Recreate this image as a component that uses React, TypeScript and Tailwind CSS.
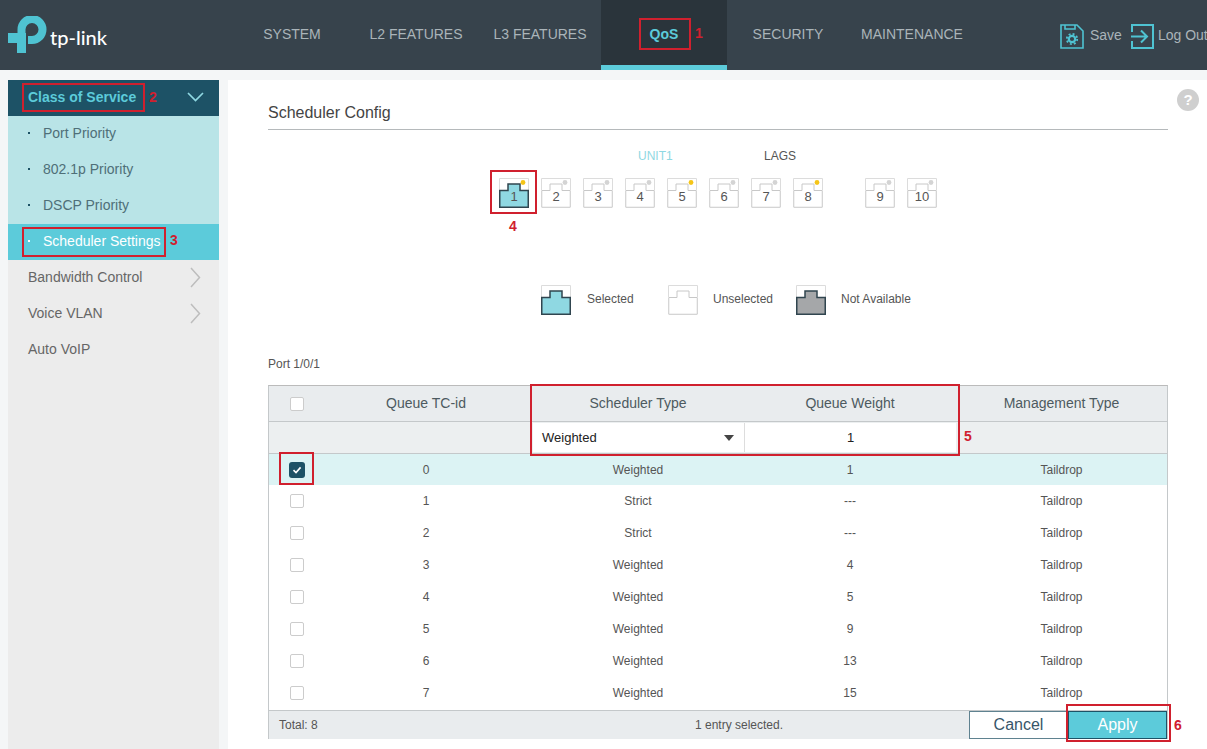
import React from 'react';

const navItems = ['SYSTEM', 'L2 FEATURES', 'L3 FEATURES', 'QoS', 'SECURITY', 'MAINTENANCE'];

const rows = [
  { id: 0, type: 'Weighted', weight: '1', checked: true },
  { id: 1, type: 'Strict', weight: '---' },
  { id: 2, type: 'Strict', weight: '---' },
  { id: 3, type: 'Weighted', weight: '4' },
  { id: 4, type: 'Weighted', weight: '5' },
  { id: 5, type: 'Weighted', weight: '9' },
  { id: 6, type: 'Weighted', weight: '13' },
  { id: 7, type: 'Weighted', weight: '15' },
];

const Logo = () => (
  <svg width="40" height="38" viewBox="0 0 40 38" className="shrink-0">
    <path d="M13.5 17 V13.5 A10.5 10.5 0 1 1 24 24 H20" fill="none" stroke="#4fc3d2" strokeWidth="8" />
    <path d="M0 17 H18 V37 H9 V27 H0 Z" fill="#4fc3d2" />
  </svg>
);

const PortIcon = ({ state, dot, label }: { state: 'selected' | 'unselected' | 'disabled'; dot?: 'on' | 'off'; label?: string }) => {
  const fill = state === 'selected' ? '#8fd8e2' : state === 'disabled' ? '#a5a7a9' : '#ffffff';
  const stroke = state === 'unselected' ? '#c8c8c8' : '#30454f';
  return (
    <div className="relative w-[30px] h-[30px] shrink-0">
      <svg width="30" height="30" viewBox="0 0 30 30" className="block">
        <path d="M0.5 12 V0.5 H29.5 V12" fill="none" stroke="#dcdcdc" />
        <path
          d="M0.75 29.25 V12.5 H9 V6 H21 V12.5 H29.25 V29.25 Z"
          fill={fill}
          stroke={stroke}
          strokeWidth={state === 'unselected' ? 1 : 1.5}
        />
        {dot && <circle cx="24" cy="4.5" r="2.4" fill={dot === 'on' ? '#f5c518' : '#d4d4d4'} />}
      </svg>
      {label && (
        <span className="absolute inset-x-0 top-[10px] text-center text-[13px] leading-[18px] text-[#555]">{label}</span>
      )}
    </div>
  );
};

const Checkbox = ({ checked }: { checked?: boolean }) =>
  checked ? (
    <span className="flex h-[16px] w-[16px] items-center justify-center rounded-[3px] bg-[#1d5266]">
      <svg width="10" height="10" viewBox="0 0 10 10">
        <path d="M1.5 5.2 L4 7.6 L8.6 2.4" fill="none" stroke="#fff" strokeWidth="1.6" />
      </svg>
    </span>
  ) : (
    <span className="block h-[14px] w-[14px] rounded-[2px] border border-[#ccc] bg-white" />
  );

const Mark = ({ className, n, numClass }: { className: string; n?: string; numClass?: string }) => (
  <>
    <div className={`absolute border-2 border-[#d0202e] pointer-events-none ${className}`} />
    {n && <span className={`absolute text-[14px] leading-[16px] font-bold text-[#d0202e] ${numClass}`}>{n}</span>}
  </>
);

const ChevronRightThin = () => (
  <svg width="11" height="21" viewBox="0 0 11 21" fill="none" stroke="#bdbdbd" strokeWidth="1.5">
    <path d="M1 1 L9.5 10.5 L1 20" />
  </svg>
);

const gridCols = 'grid grid-cols-[51px_212px_212px_212px_211px]';

export default function App() {
  return (
    <div className="relative h-[749px] w-[1207px] overflow-hidden bg-[#f4f6f7] font-['Liberation_Sans',Arial,sans-serif]">
      {/* Header */}
      <header className="flex h-[70px] items-stretch bg-[#37434c]">
        <div className="flex w-[230px] shrink-0 items-start pl-[8px] pt-[16px]">
          <Logo />
          <span className="ml-[2px] mt-[7px] font-['Lato',sans-serif] text-[20px] leading-[28px] font-medium text-white">tp-link</span>
        </div>
        <nav className="flex">
          {navItems.map((item) =>
            item === 'QoS' ? (
              <div key={item} className="flex w-[126px] -mx-px items-center justify-center border-b-[5px] border-[#5ccbda] bg-[#2a343b] pt-[3px] text-[14px] font-bold text-[#5ccbda]">
                {item}
              </div>
            ) : (
              <div key={item} className="flex w-[124px] items-center justify-center pb-[2px] text-[14px] text-[#aab4b9]">
                {item}
              </div>
            ),
          )}
        </nav>
        <div className="absolute left-[1060px] top-[23px] flex h-[26px] items-center whitespace-nowrap text-[14px] text-[#aab4b9]">
          <svg width="24" height="25" viewBox="0 0 24 25" fill="none" stroke="#4fc3d2" strokeWidth="1.6">
            <path d="M1 1 H17 L23 7 V24 H1 Z" />
            <path d="M5 1 V5 H15 V1" />
            <circle cx="12" cy="15" r="3.2" strokeWidth="2.2" />
            <circle cx="12" cy="15" r="5.2" strokeWidth="1.8" strokeDasharray="2 2.08" />
          </svg>
          <span className="ml-[6px] mb-[2px]">Save</span>
          <svg className="ml-[9px]" width="23" height="25" viewBox="0 0 23 25" fill="none" stroke="#4fc3d2" strokeWidth="2">
            <path d="M1 8 V1 H22 V24 H1 V17" />
            <path d="M0 12.5 H15 M10 6.5 L16 12.5 L10 18.5" />
          </svg>
          <span className="ml-[4px] mb-[2px]">Log Out</span>
        </div>
      </header>

      <div className="flex h-[679px] pt-[10px] pl-[8px]">
        {/* Sidebar */}
        <aside className="h-full w-[211px] shrink-0 bg-[#ececec] text-[14px]">
          <div className="flex h-[36px] items-center justify-between bg-[#1d5266] pb-[2px] pl-[20px] pr-[15px] font-bold text-[#5ccbda]">
            Class of Service
            <svg width="17" height="10" viewBox="0 0 17 10" fill="none" stroke="#8fd8e2" strokeWidth="1.7">
              <path d="M1 1 L8.5 8.5 L16 1" />
            </svg>
          </div>
          <div className="bg-[#b9e4e7] text-[#4f6f78]">
            {['Port Priority', '802.1p Priority', 'DSCP Priority'].map((s) => (
              <div key={s} className="flex h-[36px] items-center pb-[2px] pl-[20px]">
                <span className="mr-[13px] h-[2px] w-[2px] bg-[#1d5266]" />
                {s}
              </div>
            ))}
          </div>
          <div className="flex h-[36px] items-center bg-[#5ccbda] pb-[2px] pl-[20px] text-white">
            <span className="mr-[13px] h-[2px] w-[2px] bg-white" />
            Scheduler Settings
          </div>
          {['Bandwidth Control', 'Voice VLAN', 'Auto VoIP'].map((s, i) => (
            <div key={s} className="flex h-[36px] items-center justify-between pb-[2px] pl-[20px] pr-[18px] text-[#666]">
              {s}
              {i < 2 && <ChevronRightThin />}
            </div>
          ))}
        </aside>

        {/* Main panel */}
        <main className="relative ml-[9px] h-full flex-1 bg-white pl-[40px] pr-[39px]">
          <div className="flex h-[50px] items-end border-b border-[#b5b9bb] pb-[6px] text-[16px] leading-[20px] text-[#444]">
            Scheduler Config
          </div>
          <span className="absolute right-[8px] top-[9px] flex h-[22px] w-[22px] items-center justify-center rounded-full bg-[#cfcfcf] text-[15px] font-bold text-white">?</span>

          <div className="relative mt-[18px] h-[16px] text-[12px] leading-[16px]">
            <span className="absolute left-[370px] text-[#8fd8e2]">UNIT1</span>
            <span className="absolute left-[496px] text-[#555]">LAGS</span>
          </div>
          <div className="mt-[14px] ml-[231px] flex gap-[12px]">
            <PortIcon state="selected" dot="on" label="1" />
            <PortIcon state="unselected" dot="off" label="2" />
            <PortIcon state="unselected" dot="off" label="3" />
            <PortIcon state="unselected" dot="off" label="4" />
            <PortIcon state="unselected" dot="on" label="5" />
            <PortIcon state="unselected" dot="off" label="6" />
            <PortIcon state="unselected" dot="off" label="7" />
            <PortIcon state="unselected" dot="on" label="8" />
            <div className="w-[18px]" />
            <PortIcon state="unselected" dot="off" label="9" />
            <PortIcon state="unselected" dot="off" label="10" />
          </div>

          <div className="mt-[77px] ml-[273px] flex h-[30px] items-center text-[12px] text-[#555]">
            <PortIcon state="selected" />
            <span className="ml-[16px] mb-[2px] w-[81px]">Selected</span>
            <PortIcon state="unselected" />
            <span className="ml-[15px] mb-[2px] w-[83px]">Unselected</span>
            <PortIcon state="disabled" />
            <span className="ml-[15px] mb-[2px]">Not Available</span>
          </div>

          <div className="mt-[41px] h-[16px] text-[12px] leading-[16px] text-[#555]">Port 1/0/1</div>

          {/* Table */}
          <div className="mt-[13px] border border-t-[#bbb] border-x-[#c4c8ca] border-b-0">
            <div className={`${gridCols} h-[36px] items-center border-b border-[#c4c8ca] bg-[#e9ecee] text-center text-[14px] text-[#4d5a60]`}>
              <span className="ml-[21px]"><Checkbox /></span>
              <span>Queue TC-id</span>
              <span>Scheduler Type</span>
              <span>Queue Weight</span>
              <span>Management Type</span>
            </div>
            <div className={`${gridCols} h-[32px] border-b border-[#c4c8ca] bg-[#eceff0] py-px`}>
              <span />
              <span />
              <div className="ml-px flex items-center justify-between bg-white pl-[9px] pr-[10px] text-[13px] text-[#222]">
                Weighted
                <span className="h-0 w-0 border-x-[5px] border-t-[6px] border-x-transparent border-t-[#444]" />
              </div>
              <div className="flex items-center justify-center border-l border-[#ddd] bg-white text-[13px] text-[#222]">1</div>
              <span />
            </div>
            {rows.map((r) => (
              <div key={r.id} className={`${gridCols} items-center text-center text-[12px] text-[#555] ${r.checked ? 'h-[31px] bg-[#dcf3f4]' : 'h-[32px] bg-white'}`}>
                <span className={r.checked ? 'ml-[20px]' : 'ml-[21px]'}><Checkbox checked={r.checked} /></span>
                <span>{r.id}</span>
                <span>{r.type}</span>
                <span>{r.weight}</span>
                <span>Taildrop</span>
              </div>
            ))}
            <div className="mt-px flex h-[29px] items-stretch border-t border-[#c4c8ca] bg-[#e9ecee] text-[12px] text-[#555]">
              <span className="flex w-[250px] items-center pl-[10px]">Total: 8</span>
              <span className="flex w-[440px] items-center justify-center">1 entry selected.</span>
              <button className="ml-[10px] w-[99px] border border-[#5f8290] bg-white text-[16px] text-[#37566a]">Cancel</button>
              <button className="flex-1 border border-[#1d5266] bg-[#5ccbda] text-[16px] text-white">Apply</button>
            </div>
          </div>
        </main>
      </div>

      {/* Red call-outs drawn over the screenshot */}
      <Mark className="left-[639px] top-[18px] h-[32px] w-[52px]" n="1" numClass="left-[695px] top-[25px]" />
      <Mark className="left-[22px] top-[83px] h-[29px] w-[123px]" n="2" numClass="left-[149px] top-[89px]" />
      <Mark className="left-[22px] top-[227px] h-[30px] w-[144px]" n="3" numClass="left-[170px] top-[232px]" />
      <Mark className="left-[490px] top-[170px] h-[44px] w-[47px]" n="4" numClass="left-[509px] top-[218px]" />
      <Mark className="left-[530px] top-[384px] h-[72px] w-[430px]" n="5" numClass="left-[964px] top-[428px]" />
      <Mark className="left-[279px] top-[452px] h-[33px] w-[35px]" />
      <Mark className="left-[1066px] top-[704px] h-[38px] w-[105px]" n="6" numClass="left-[1174px] top-[717px]" />
    </div>
  );
}
